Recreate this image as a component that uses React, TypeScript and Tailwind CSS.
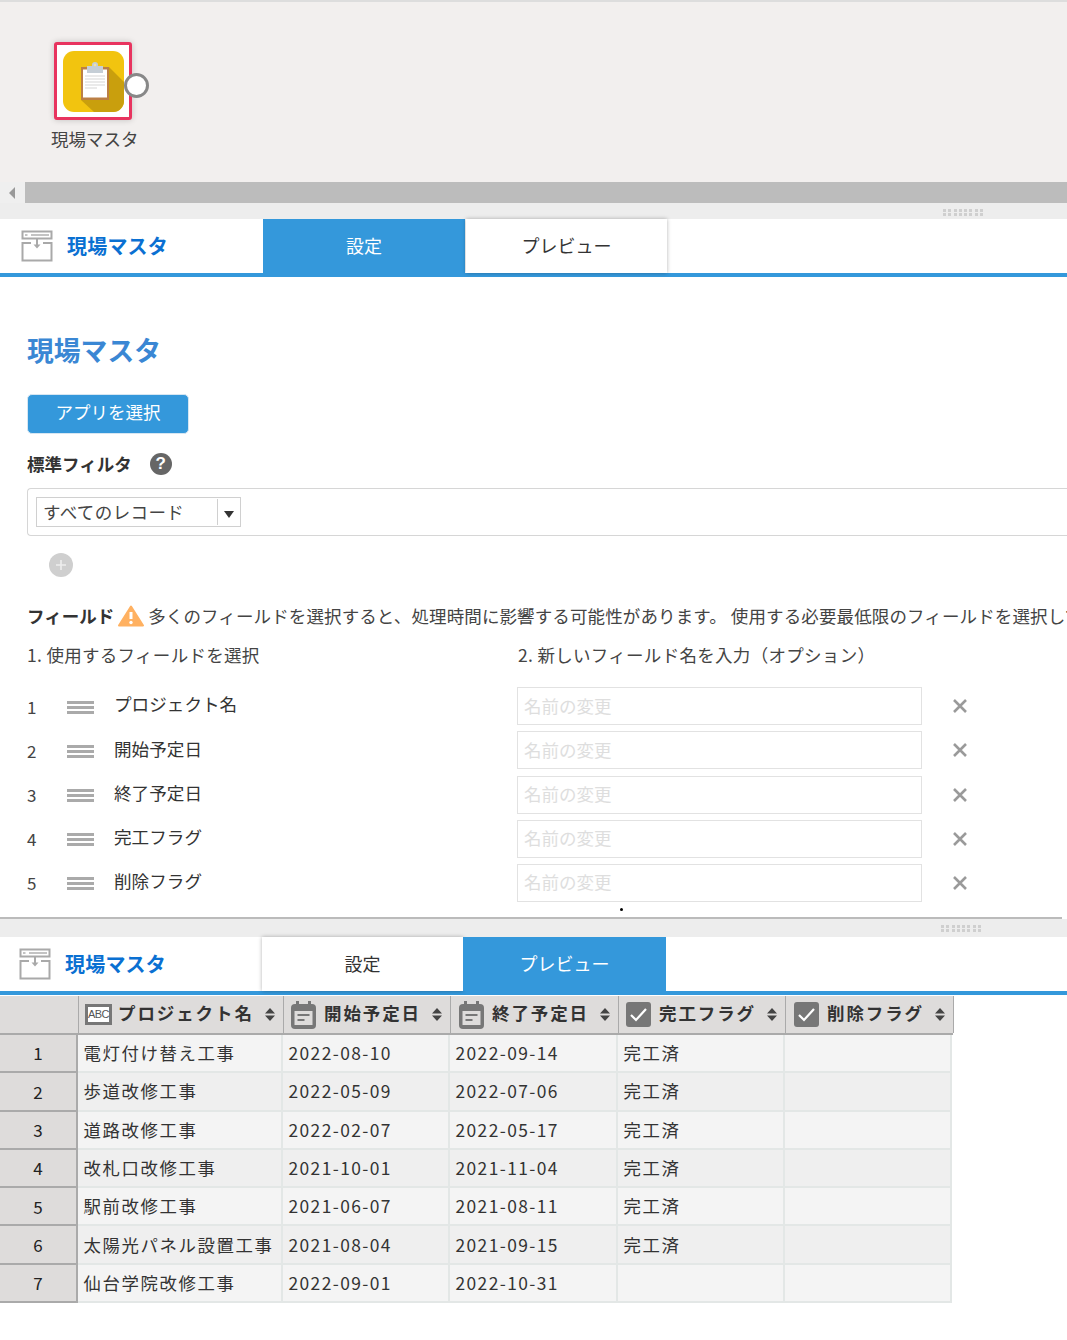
import React from "react";

const FONT = "font-['Noto_Sans_CJK_JP','Noto_Sans',sans-serif]";

function Dots() {
  return (
    <div className="grid grid-cols-[repeat(8,3px)] gap-x-[2.3px] gap-y-[1px]">
      {Array.from({ length: 16 }).map((_, i) => (
        <div key={i} className="h-[3px] w-[3px] bg-[#cfcfcf]" />
      ))}
    </div>
  );
}

function Divider({ h, pr, mt }: { h: string; pr: string; mt: string }) {
  return (
    <div className={`flex justify-end bg-[#ededed] ${h} ${pr}`}>
      <div className={mt}>
        <Dots />
      </div>
    </div>
  );
}

function BoxIcon() {
  return (
    <svg width="32" height="32" viewBox="0 0 32 32" fill="none" stroke="#a9a9a9" strokeWidth="2">
      <rect x="1.5" y="1.5" width="29" height="7" fill="#fff" />
      <path d="M10 5h18" strokeWidth="1.4" />
      <path d="M4 5h2.5" strokeWidth="1.4" />
      <path d="M10 13H1.5v17.5h29V13H22" />
      <path d="M16 9v7" strokeWidth="2" />
      <path d="M12.5 14.5h7L16 18.5z" fill="#a9a9a9" stroke="none" />
    </svg>
  );
}

function TabBar({ left, active, wide }: { left: string; active: "settings" | "preview"; wide: string }) {
  const blue = "bg-[#3498db] text-white";
  const white = "bg-white text-[#333] shadow-[0_0_4px_rgba(0,0,0,0.3)]";
  return (
    <div className="flex h-[58px] items-stretch border-b-4 border-[#3498db] bg-white">
      <div className={`flex items-center gap-[14px] ${left} ${wide}`}>
        <BoxIcon />
        <span className="text-[20px] font-bold tracking-[0.2px] text-[#0a70d2]">現場マスタ</span>
      </div>
      {active === "settings" ? (
        <>
          <div className={`flex w-[202px] items-center justify-center pb-[2px] text-[18px] ${blue}`}>設定</div>
          <div className={`ml-[1px] flex h-[54px] w-[201px] items-center justify-center pb-[2px] text-[18px] ${white}`}>プレビュー</div>
        </>
      ) : (
        <>
          <div className={`ml-[1px] flex h-[54px] w-[201px] items-center justify-center pb-[2px] text-[18px] ${white}`}>設定</div>
          <div className={`flex w-[203px] items-center justify-center pb-[2px] text-[18px] ${blue}`}>プレビュー</div>
        </>
      )}
    </div>
  );
}

function ClipboardIcon() {
  return (
    <svg width="61" height="61" viewBox="0 0 61 61">
      <rect width="61" height="61" rx="11" fill="#f2c40f" />
      <path d="M46 16 L61 31 V50 A11 11 0 0 1 50 61 H31 L18 49 Z" fill="#c99f0d" />
      <rect x="18" y="16" width="28" height="33" fill="#bb7f45" />
      <rect x="20" y="18.5" width="24" height="28" fill="#fff" />
      <rect x="24" y="15" width="16" height="7" fill="#c5ced6" />
      <circle cx="32" cy="14" r="3" fill="#c5ced6" />
      <circle cx="32" cy="14" r="1.2" fill="#f4e3a0" />
      <path d="M22 25h20M22 28h20M22 31h20M22 34h20M22 37h12" stroke="#e4e4e4" strokeWidth="1.4" />
    </svg>
  );
}

function DragHandle() {
  return (
    <div className="flex w-[27px] flex-col gap-[2px]">
      <div className="h-[3px] bg-[#aaa]" />
      <div className="h-[3px] bg-[#aaa]" />
      <div className="h-[3px] bg-[#aaa]" />
    </div>
  );
}

const fields = [
  { n: 1, name: "プロジェクト名", h: "h-[44px]" },
  { n: 2, name: "開始予定日", h: "h-[44.5px]" },
  { n: 3, name: "終了予定日", h: "h-[44px]" },
  { n: 4, name: "完工フラグ", h: "h-[44px]" },
  { n: 5, name: "削除フラグ", h: "h-[44px]" },
];

function FieldRow({ n, name, h }: { n: number; name: string; h: string }) {
  return (
    <div className={`flex items-center ${h}`}>
      <div className="w-[40px] pt-[1px] text-[17px] text-[#444]">{n}</div>
      <div className="pt-[2px]">
        <DragHandle />
      </div>
      <div className="ml-[20px] w-[403px] pb-[3px] text-[17.6px] text-[#333]">{name}</div>
      <div className="flex h-[38px] w-[405px] items-center border border-[#e2e2e2] px-[6px] text-[17.5px] text-[#dedede]">
        名前の変更
      </div>
      <svg className="ml-[31px]" width="14" height="14" viewBox="0 0 14 14" stroke="#9a9a9a" strokeWidth="2.6">
        <path d="M1 1l12 12M13 1L1 13" />
      </svg>
    </div>
  );
}

function ColIcon({ kind }: { kind: "abc" | "cal" | "check" }) {
  if (kind === "abc") {
    return (
      <div className="flex h-[21px] w-[27px] items-center justify-center border-[3px] border-[#777] bg-white font-['Liberation_Sans',sans-serif] text-[11px] leading-none tracking-[-0.5px] text-[#555]">
        ABC
      </div>
    );
  }
  if (kind === "cal") {
    return (
      <svg width="25" height="28" viewBox="0 0 25 28">
        <rect x="5" y="0" width="3" height="6" fill="#777" />
        <rect x="17" y="0" width="3" height="6" fill="#777" />
        <rect x="0" y="3" width="25" height="25" rx="4" fill="#777" />
        <rect x="3.5" y="10" width="18" height="14" fill="#dedcdb" />
        <path d="M6.5 14h12" stroke="#777" strokeWidth="2" />
        <path d="M6.5 19h7" stroke="#777" strokeWidth="2" />
      </svg>
    );
  }
  return (
    <svg width="25" height="25" viewBox="0 0 25 25">
      <rect width="25" height="25" rx="3" fill="#777" />
      <path d="M5 13l5 5L20 7" fill="none" stroke="#fff" strokeWidth="2.2" />
    </svg>
  );
}

function Sort() {
  return (
    <svg width="10" height="15" viewBox="0 0 10 15" fill="#444">
      <path d="M5 1l5 5.5H0zM5 14l5-5.5H0z" />
    </svg>
  );
}

const columns: { label: string; kind: "abc" | "cal" | "check"; w: string; gap: string; pl: string }[] = [
  { label: "プロジェクト名", kind: "abc", w: "w-[205px]", gap: "gap-[6px]", pl: "pl-[6px]" },
  { label: "開始予定日", kind: "cal", w: "w-[167px]", gap: "gap-[8px]", pl: "pl-[7px]" },
  { label: "終了予定日", kind: "cal", w: "w-[168px]", gap: "gap-[8px]", pl: "pl-[8px]" },
  { label: "完工フラグ", kind: "check", w: "w-[167px]", gap: "gap-[8px]", pl: "pl-[7px]" },
  { label: "削除フラグ", kind: "check", w: "w-[168px]", gap: "gap-[8px]", pl: "pl-[8px]" },
];

const rows = [
  ["電灯付け替え工事", "2022-08-10", "2022-09-14", "完工済"],
  ["歩道改修工事", "2022-05-09", "2022-07-06", "完工済"],
  ["道路改修工事", "2022-02-07", "2022-05-17", "完工済"],
  ["改札口改修工事", "2021-10-01", "2021-11-04", "完工済"],
  ["駅前改修工事", "2021-06-07", "2021-08-11", "完工済"],
  ["太陽光パネル設置工事", "2021-08-04", "2021-09-15", "完工済"],
  ["仙台学院改修工事", "2022-09-01", "2022-10-31", ""],
];

const cellWidths = ["w-[205px]", "w-[167px]", "w-[168px]", "w-[167px]", "w-[167px]"];

function PreviewTable() {
  return (
    <div className="mt-[1px] w-[953px] text-[#333]">
      <div className="flex h-[39px] border-b-2 border-[#aaa] bg-[#dedcdb]">
        <div className="w-[79px] shrink-0 border-r border-[#aaa]" />
        {columns.map((c) => (
          <div key={c.label} className={`flex shrink-0 items-center border-r border-[#aaa] ${c.w} ${c.pl}`}>
            <div className={`flex flex-1 items-center ${c.gap}`}>
              <ColIcon kind={c.kind} />
              <span className="-translate-y-[1px] text-[17.5px] font-bold tracking-[1.9px] text-[#333]">{c.label}</span>
            </div>
            <div className="mr-[8px]">
              <Sort />
            </div>
          </div>
        ))}
      </div>
      {rows.map((r, i) => (
        <div key={i} className={`flex h-[38.3px] w-[952px] ${i % 2 === 0 ? "bg-[#f4f4f4]" : "bg-[#efefef]"}`}>
          <div className="flex w-[78px] shrink-0 items-center justify-center border-r-2 border-b-2 border-[#aaa] bg-[#dedcdb] text-[17px] text-[#222]">
            {i + 1}
          </div>
          {[r[0], r[1], r[2], r[3], ""].map((t, j) => (
            <div
              key={j}
              className={`flex shrink-0 items-center border-r-2 border-b-2 border-[#e3e7e6] pl-[5.5px] text-[17.4px] ${j === 1 || j === 2 ? "tracking-[1.4px]" : "tracking-[1.6px]"} ${cellWidths[j]}`}
            >
              {t}
            </div>
          ))}
        </div>
      ))}
    </div>
  );
}

export default function App() {
  return (
    <div className={`h-[1340px] w-[1067px] overflow-hidden bg-white ${FONT}`}>
      {/* canvas */}
      <div className="h-[182px] border-t-2 border-[#ddd] bg-[#f2efee] pl-[51px] pt-[40px]">
        <div className="relative ml-[3px] flex h-[78px] w-[78px] items-center justify-center rounded-[3px] border-[3px] border-[#e8345f] bg-white shadow-[0_0_6px_rgba(0,0,0,0.2)]">
          <ClipboardIcon />
          <div className="absolute left-[67px] top-[28px] h-[25px] w-[25px] rounded-full border-[3px] border-[#888] bg-white" />
        </div>
        <div className="mt-[6px] text-[17.5px] leading-[26px] text-[#444]">現場マスタ</div>
      </div>
      {/* scrollbar */}
      <div className="flex h-[21px] bg-[#ececec]">
        <div className="flex w-[25px] items-center justify-center bg-[#efefef] pr-[2px]">
          <div className="h-0 w-0 border-y-[6px] border-r-[6px] border-y-transparent border-r-[#999]" />
        </div>
        <div className="flex-1 bg-[#bcbcbc]" />
      </div>
      <Divider h="h-[16px]" pr="pr-[84px]" mt="mt-[6px]" />
      <TabBar left="pl-[21px]" active="settings" wide="w-[263px]" />

      {/* settings */}
      <div className="h-[640px] pl-[27px]">
        <h1 className="pt-[53px] text-[26.8px] font-bold leading-[40px] text-[#3a87d4]">現場マスタ</h1>
        <button className="mt-[24px] flex h-[40px] w-[162px] items-center justify-center rounded-[5px] border border-[#d6e6f2] bg-[#3498db] pb-[3px] text-[17.5px] text-white">
          アプリを選択
        </button>
        <div className="mt-[17px] flex h-[26px] items-center gap-[18px]">
          <span className="text-[17.5px] font-bold text-[#333]">標準フィルタ</span>
          <div className="flex h-[22px] w-[22px] items-center justify-center rounded-full bg-[#666] font-['Liberation_Sans',sans-serif] text-[17px] font-bold text-white">
            ?
          </div>
        </div>
        <div className="mt-[11px] flex h-[48px] items-center rounded-l-[4px] border border-r-0 border-[#d6d6d6] pl-[8px]">
          <div className="flex h-[30px] w-[205px] items-center border border-[#d0d0d0] pl-[6px]">
            <span className="w-[174px] whitespace-nowrap text-[17.5px] leading-[26px] tracking-[0.4px] text-[#444]">すべてのレコード</span>
            <div className="h-[26px] w-[1px] bg-[#d0d0d0]" />
            <div className="ml-[6px] mt-[4px] h-0 w-0 border-x-[5px] border-t-[7px] border-x-transparent border-t-[#333]" />
          </div>
        </div>
        <div className="ml-[22px] mt-[17px] flex h-[24px] w-[24px] items-center justify-center rounded-full bg-[#cfcfcf]">
          <svg width="12" height="12" viewBox="0 0 12 12" stroke="#eee" strokeWidth="1.6">
            <path d="M6 1v10M1 6h10" />
          </svg>
        </div>
        <div className="mt-[24px] flex h-[30px] items-center whitespace-nowrap text-[17.5px] text-[#444]">
          <span className="shrink-0 font-bold text-[#333]">フィールド</span>
          <svg className="mx-[4px] shrink-0" width="26" height="22" viewBox="0 0 26 22">
            <path d="M13 1.5L25 20.5H1z" fill="#ffb161" stroke="#ffb161" strokeWidth="2" strokeLinejoin="round" />
            <path d="M13 7v7" stroke="#fff" strokeWidth="3" />
            <circle cx="13" cy="17.5" r="1.7" fill="#fff" />
          </svg>
          <span className="shrink-0 tracking-[0.12px]">多くのフィールドを選択すると、処理時間に影響する可能性があります。 使用する必要最低限のフィールドを選択してください。</span>
        </div>
        <div className="mt-[9px] flex h-[30px] items-center text-[17.5px] tracking-[0.3px] text-[#444]">
          <span className="w-[491px]">1. 使用するフィールドを選択</span>
          <span>2. 新しいフィールド名を入力（オプション）</span>
        </div>
        <div className="mt-[14px]">
          {fields.map((f) => (
            <FieldRow key={f.n} {...f} />
          ))}
        </div>
        <div className="ml-[593px] mt-[3px] h-[3px] w-[3px] rounded-full bg-black" />
      </div>
      <div className="h-[2px] w-[1062px] bg-[#bbb]" />
      <Divider h="h-[18px]" pr="pr-[86px]" mt="mt-[6px]" />
      <TabBar left="pl-[19px]" active="preview" wide="w-[261px]" />
      <PreviewTable />
    </div>
  );
}
